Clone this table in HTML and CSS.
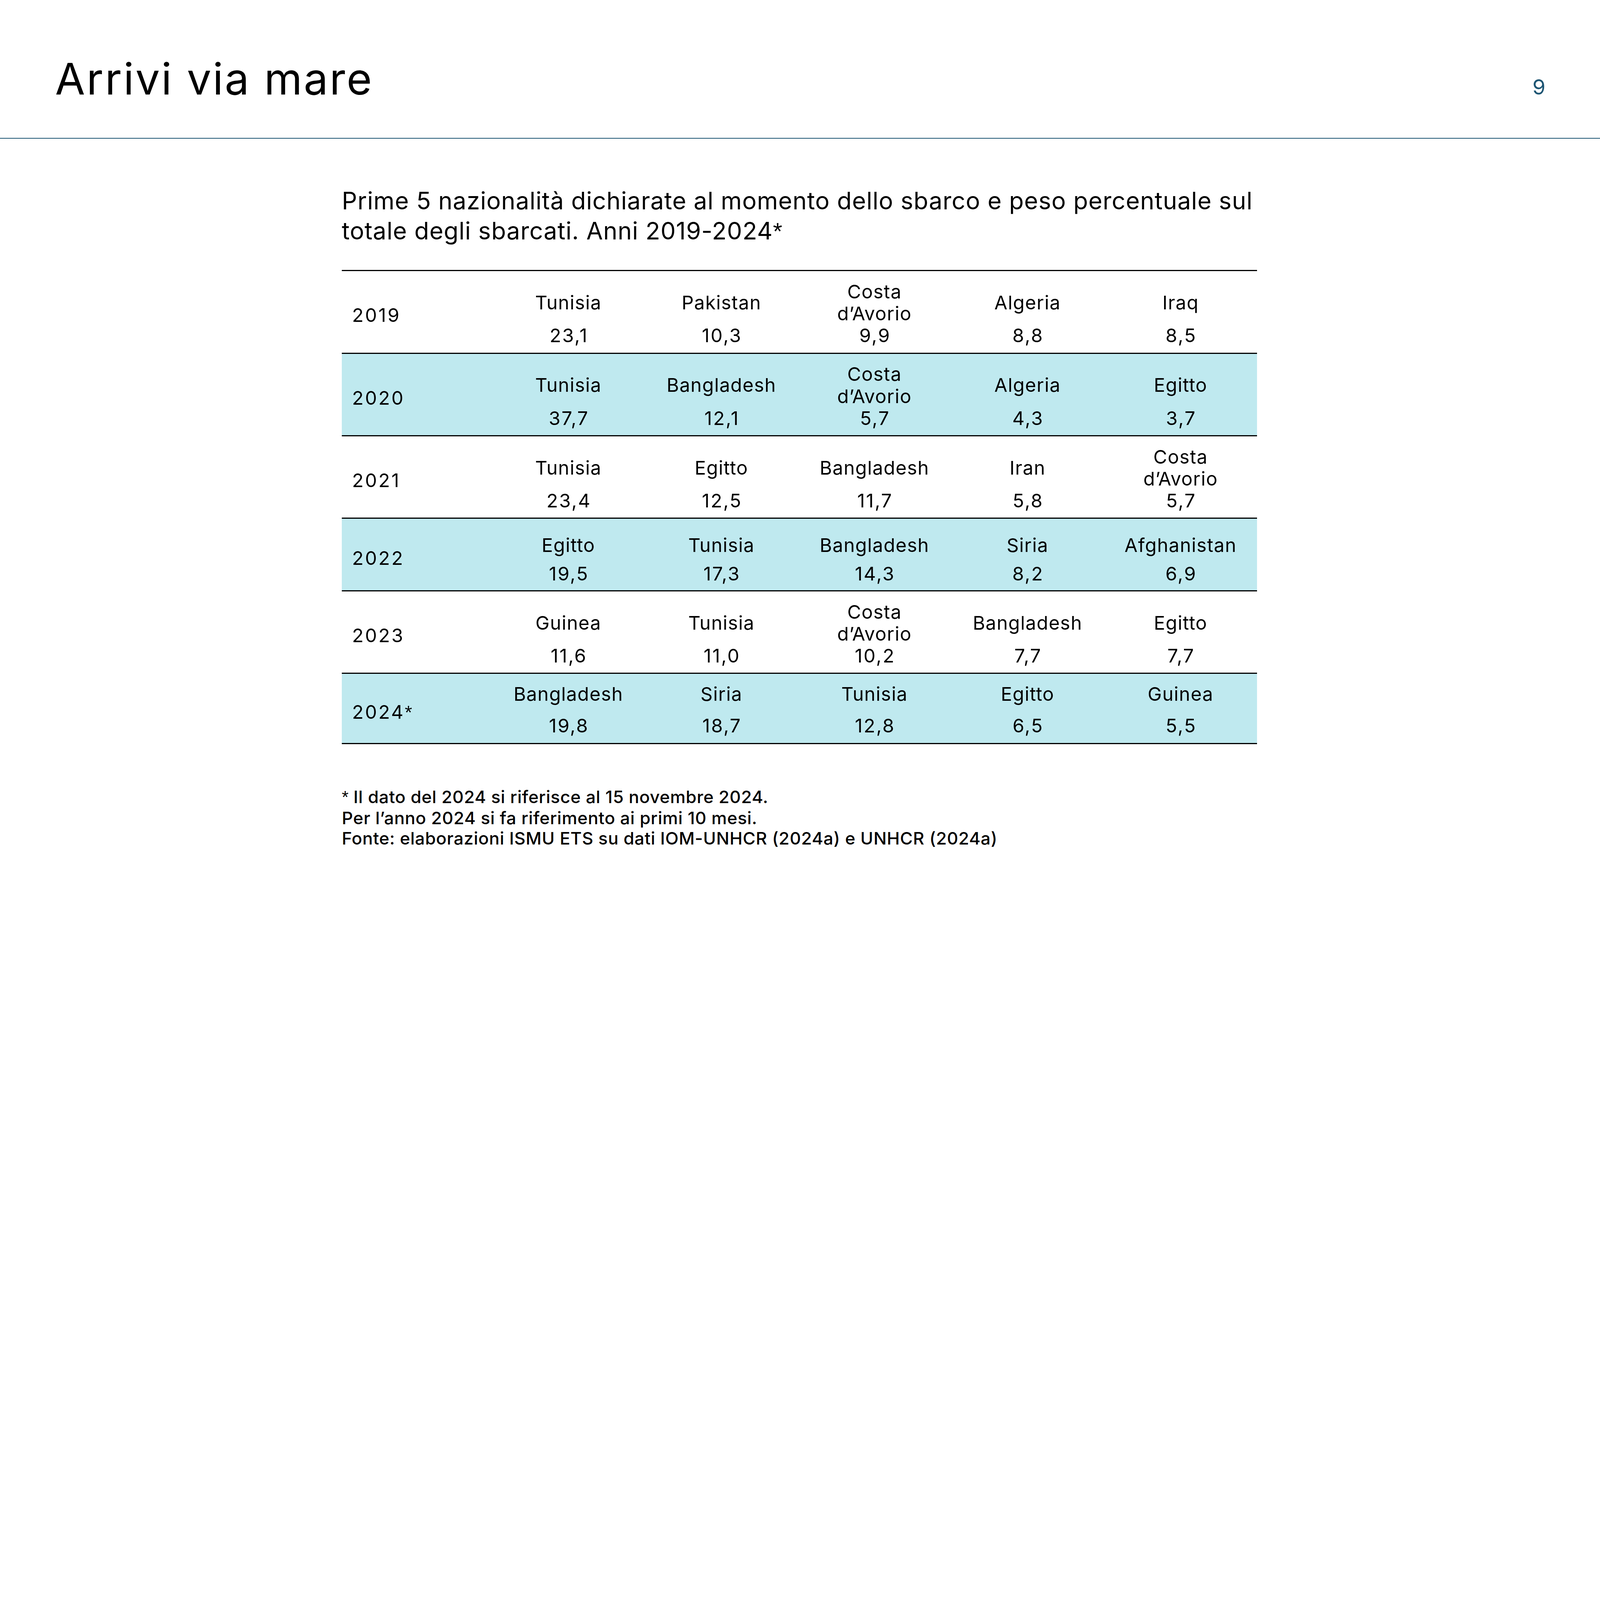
FILE: index.html
```html
<!DOCTYPE html>
<html lang="it">
<head>
<meta charset="utf-8">
<title>Arrivi via mare</title>
<link rel="stylesheet" href="styles.css">
</head>
<body>
<div class="slide">
  <header class="head">
    <h1 class="title">Arrivi via mare</h1>
    <span class="pagenum">9</span>
  </header>

  <main class="content">
    <p class="caption">Prime 5 nazionalità dichiarate al momento dello sbarco e peso percentuale sul totale degli sbarcati. Anni 2019-2024<span class="ast">*</span></p>

    <div class="table">
      <div class="row row--tall">
        <div class="year">2019</div>
        <div class="cell"><div class="name">Tunisia</div><div class="val">23,1</div></div>
        <div class="cell"><div class="name">Pakistan</div><div class="val">10,3</div></div>
        <div class="cell"><div class="name">Costa<br>d’Avorio</div><div class="val">9,9</div></div>
        <div class="cell"><div class="name">Algeria</div><div class="val">8,8</div></div>
        <div class="cell"><div class="name">Iraq</div><div class="val">8,5</div></div>
      </div>
      <div class="row row--tall row--band">
        <div class="year">2020</div>
        <div class="cell"><div class="name">Tunisia</div><div class="val">37,7</div></div>
        <div class="cell"><div class="name">Bangladesh</div><div class="val">12,1</div></div>
        <div class="cell"><div class="name">Costa<br>d’Avorio</div><div class="val">5,7</div></div>
        <div class="cell"><div class="name">Algeria</div><div class="val">4,3</div></div>
        <div class="cell"><div class="name">Egitto</div><div class="val">3,7</div></div>
      </div>
      <div class="row row--tall">
        <div class="year">2021</div>
        <div class="cell"><div class="name">Tunisia</div><div class="val">23,4</div></div>
        <div class="cell"><div class="name">Egitto</div><div class="val">12,5</div></div>
        <div class="cell"><div class="name">Bangladesh</div><div class="val">11,7</div></div>
        <div class="cell"><div class="name">Iran</div><div class="val">5,8</div></div>
        <div class="cell"><div class="name">Costa<br>d’Avorio</div><div class="val">5,7</div></div>
      </div>
      <div class="row row--mid row--band">
        <div class="year">2022</div>
        <div class="cell"><div class="name">Egitto</div><div class="val">19,5</div></div>
        <div class="cell"><div class="name">Tunisia</div><div class="val">17,3</div></div>
        <div class="cell"><div class="name">Bangladesh</div><div class="val">14,3</div></div>
        <div class="cell"><div class="name">Siria</div><div class="val">8,2</div></div>
        <div class="cell"><div class="name">Afghanistan</div><div class="val">6,9</div></div>
      </div>
      <div class="row row--tall">
        <div class="year">2023</div>
        <div class="cell"><div class="name">Guinea</div><div class="val">11,6</div></div>
        <div class="cell"><div class="name">Tunisia</div><div class="val">11,0</div></div>
        <div class="cell"><div class="name">Costa<br>d’Avorio</div><div class="val">10,2</div></div>
        <div class="cell"><div class="name">Bangladesh</div><div class="val">7,7</div></div>
        <div class="cell"><div class="name">Egitto</div><div class="val">7,7</div></div>
      </div>
      <div class="row row--short row--band">
        <div class="year">2024<span class="ast">*</span></div>
        <div class="cell"><div class="name">Bangladesh</div><div class="val">19,8</div></div>
        <div class="cell"><div class="name">Siria</div><div class="val">18,7</div></div>
        <div class="cell"><div class="name">Tunisia</div><div class="val">12,8</div></div>
        <div class="cell"><div class="name">Egitto</div><div class="val">6,5</div></div>
        <div class="cell"><div class="name">Guinea</div><div class="val">5,5</div></div>
      </div>
    </div>

    <div class="notes">
      <p><span class="ast">*</span> Il dato del 2024 si riferisce al 15 novembre 2024.</p>
      <p>Per l’anno 2024 si fa riferimento ai primi 10 mesi.</p>
      <p>Fonte: elaborazioni ISMU ETS su dati IOM-UNHCR (2024a) e UNHCR (2024a)</p>
    </div>
  </main>
</div>
</body>
</html>
```

FILE: styles.css
```css
/* 1 design unit = 1/1568 of the viewport width (slide designed at 1568 x 882) */
:root {
  --u: calc(100vw / 1568);
}

html, body {
  margin: 0;
  padding: 0;
  background: #ffffff;
  overflow: hidden;
}

body {
  font-family: Inter, "Liberation Sans", Arial, sans-serif;
  color: #000000;
}

.slide {
  width: calc(1568 * var(--u));
  height: calc(882 * var(--u));
  overflow: hidden;
  background: #ffffff;
}

/* five-armed asterisk, as in the reference */
.ast {
  font-family: "Liberation Sans", Arial, sans-serif;
  font-weight: 400;
  letter-spacing: 0;
}

/* Header */
.head {
  box-sizing: border-box;
  height: calc(135.8 * var(--u));
  padding: calc(56 * var(--u)) calc(53 * var(--u)) 0 calc(54 * var(--u));
  display: flex;
  align-items: baseline;
  justify-content: space-between;
  border-bottom: calc(1 * var(--u)) solid #1d5573;
}

.title {
  margin: 0;
  font-size: calc(42.6 * var(--u));
  line-height: 1;
  font-weight: 400;
  letter-spacing: calc(1.4 * var(--u));
}

.pagenum {
  font-size: calc(20.6 * var(--u));
  line-height: 1;
  color: #1d5573;
  letter-spacing: calc(0.5 * var(--u));
}

/* Content column */
.content {
  margin-left: calc(335 * var(--u));
  width: calc(897 * var(--u));
  padding-top: calc(46.6 * var(--u));
}

.caption {
  margin: 0 calc(-14 * var(--u)) calc(23 * var(--u)) 0;
  font-size: calc(23.5 * var(--u));
  line-height: calc(29.4 * var(--u));
  font-weight: 400;
  letter-spacing: calc(0.36 * var(--u));
}

/* Table */
.table {
  border-top: calc(1.2 * var(--u)) solid #000;
}

.row {
  display: grid;
  grid-template-columns: calc(147 * var(--u)) repeat(5, calc(150 * var(--u)));
  border-bottom: calc(1.2 * var(--u)) solid #000;
  font-size: calc(18.5 * var(--u));
  line-height: calc(21.5 * var(--u));
  letter-spacing: calc(0.5 * var(--u));
}

.row--band {
  background: #bfe9ef;
}

.row--tall { height: calc(79.8 * var(--u)); }
.row--mid { height: calc(69.8 * var(--u)); }
.row--short { height: calc(67.8 * var(--u)); }

.year {
  align-self: center;
  padding: calc(7 * var(--u)) 0 0 calc(10 * var(--u));
  font-weight: 400;
  letter-spacing: calc(1.45 * var(--u));
}

.cell {
  display: flex;
  flex-direction: column;
  align-items: center;
  text-align: center;
}

.name {
  display: flex;
  flex-direction: column;
  justify-content: center;
}

.val {
  letter-spacing: calc(1.1 * var(--u));
  margin-right: calc(-1.1 * var(--u));
}

.row--tall .cell { padding-top: calc(9.5 * var(--u)); }
.row--tall .name { height: calc(43 * var(--u)); }

.row--mid .cell { padding-top: calc(8.5 * var(--u)); }
.row--mid .name { height: calc(34.5 * var(--u)); }

.row--short .cell { padding-top: calc(9 * var(--u)); }
.row--short .name { height: calc(31 * var(--u)); justify-content: flex-start; }

/* Notes */
.notes {
  margin-top: calc(41.5 * var(--u));
  font-size: calc(17 * var(--u));
  line-height: calc(20.2 * var(--u));
  font-weight: 500;
  letter-spacing: calc(0.25 * var(--u));
}

.notes p {
  margin: 0;
}
```
